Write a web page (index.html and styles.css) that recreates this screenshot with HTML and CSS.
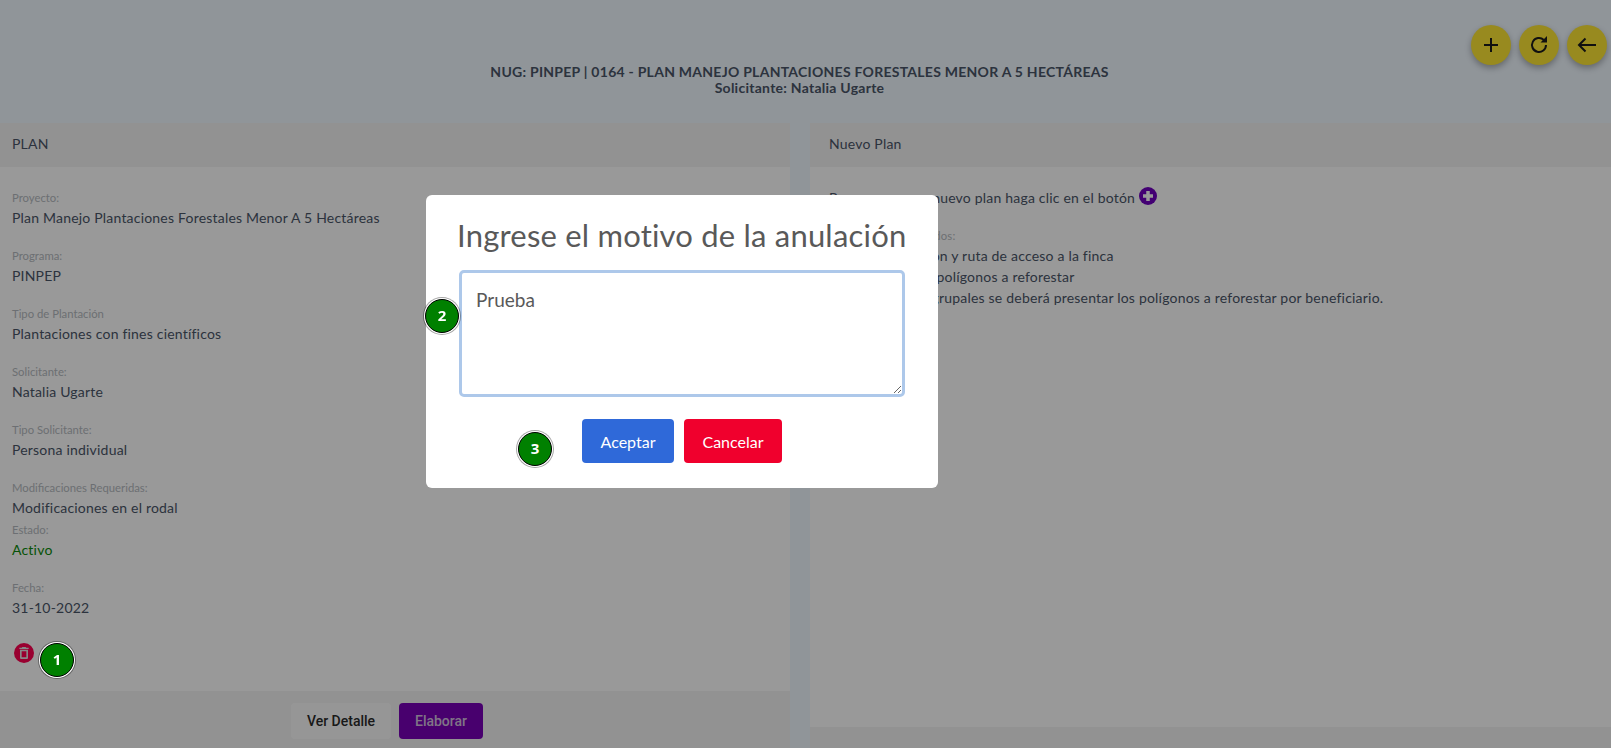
FILE: index.html
```html
<!DOCTYPE html>
<html lang="es">
<head>
<meta charset="utf-8">
<title>Plan</title>
<link rel="stylesheet" href="styles.css">
</head>
<body>
<div class="page">
  <header class="topbar">
    <div class="fabs">
      <button class="fab"><svg viewBox="0 0 24 24" class="fab-icon"><path d="M12 5v14M5 12h14"/></svg></button>
      <button class="fab"><svg viewBox="0 0 24 24" class="fab-icon"><path d="M19 12a7 7 0 1 1-2.200-5.100"/><path class="solid" d="M13.500 9.500h6.500V3z"/></svg></button>
      <button class="fab"><svg viewBox="0 0 24 24" class="fab-icon"><path d="M21 12H4M10.500 5.500 4 12l6.500 6.500"/></svg></button>
    </div>
    <h1 class="title">NUG: PINPEP | 0164 - PLAN MANEJO PLANTACIONES FORESTALES MENOR A 5 HECTÁREAS<br>Solicitante: Natalia Ugarte</h1>
  </header>
  <main class="cards">
    <section class="card">
      <div class="card-head head-left">PLAN</div>
      <div class="card-body body-left">
        <div class="field"><div class="label">Proyecto:</div><div class="value">Plan Manejo Plantaciones Forestales Menor A 5 Hectáreas</div></div>
        <div class="field"><div class="label">Programa:</div><div class="value">PINPEP</div></div>
        <div class="field"><div class="label">Tipo de Plantación</div><div class="value">Plantaciones con fines científicos</div></div>
        <div class="field"><div class="label">Solicitante:</div><div class="value">Natalia Ugarte</div></div>
        <div class="field"><div class="label">Tipo Solicitante:</div><div class="value">Persona individual</div></div>
        <div class="field tight"><div class="label">Modificaciones Requeridas:</div><div class="value">Modificaciones en el rodal</div></div>
        <div class="field"><div class="label">Estado:</div><div class="value active">Activo</div></div>
        <div class="field"><div class="label">Fecha:</div><div class="value">31-10-2022</div></div>
        <button class="trash"><svg viewBox="0 0 24 24" class="trash-icon"><path d="M6 19c0 1.100.9 2 2 2h8c1.100 0 2-.9 2-2V7H6v12zM8.500 9.500h7v9h-7zm7-5.500-1-1h-5l-1 1H5v2h14V4z" fill-rule="evenodd"/></svg></button>
      </div>
      <div class="card-foot foot-left">
        <button class="btn btn-light">Ver Detalle</button>
        <button class="btn btn-purple">Elaborar</button>
      </div>
    </section>
    <section class="card">
      <div class="card-head head-right">Nuevo Plan</div>
      <div class="card-body body-right">
        <p class="intro">Para generar un nuevo plan haga clic en el botón <svg viewBox="0 0 18 18" class="add-icon"><circle cx="9" cy="9" r="9"/><path d="M9 4v10M4 9h10"/></svg></p>
        <div class="label req">Documentos requeridos:</div>
        <div class="value">Plano de ubicación y ruta de acceso a la finca</div>
        <div class="value">Ubicación de los polígonos a reforestar</div>
        <div class="value">Para solicitudes grupales se deberá presentar los polígonos a reforestar por beneficiario.</div>
      </div>
      <div class="card-foot foot-right"></div>
    </section>
  </main>
</div>
<div class="overlay">
  <div class="modal">
    <h2 class="modal-title">Ingrese el motivo de la anulación</h2>
    <textarea class="reason">Prueba</textarea>
    <div class="actions">
      <button class="action accept">Aceptar</button>
      <button class="action cancel">Cancelar</button>
    </div>
  </div>
  <span class="badge badge-1">1</span>
  <span class="badge badge-2">2</span>
  <span class="badge badge-3">3</span>
</div>
</body>
</html>
```
FILE: styles.css
```css
* { box-sizing: border-box; }
html, body { margin: 0; height: 100%; overflow: hidden; }
body { background: #f0f8ff; font-family: "Lato", "Noto Sans", sans-serif; color: #4a5568; font-size: 14px; letter-spacing: .2px; }
button { font-family: inherit; border: 0; cursor: pointer; }
.page { height: 748px; display: flex; flex-direction: column; }
.topbar { height: 123px; flex: none; padding: 25px 4px 0 0; }
.fabs { display: flex; justify-content: flex-end; gap: 8px; height: 39px; }
.fab { width: 40px; height: 40px; border-radius: 50%; padding: 8px; background: #fde635; box-shadow: 0 3px 6px rgba(0,0,0,.3); }
.fab-icon { width: 24px; height: 24px; display: block; fill: none; stroke: #1c1c1c; stroke-width: 2; }
.fab-icon .solid { fill: #1c1c1c; stroke: none; }
.title { margin: 0; padding-right: 8px; font-size: 14px; line-height: 16px; font-weight: 700; letter-spacing: .26px; text-align: center; }
.cards { flex: 1; min-height: 0; display: grid; grid-template-columns: 790px 1fr; gap: 20px; }
.card { background: #fff; display: flex; flex-direction: column; min-height: 0; }
.card-head { height: 44px; flex: none; background: #f4f4f4; display: flex; align-items: center; padding-bottom: 3px; }
.head-left { padding-left: 12px; }
.head-right { padding-left: 19px; }
.card-body { flex: 1; min-height: 0; }
.body-left { padding: 22px 12px 0; }
.body-right { padding: 20px 19px 0; }
.card-foot { flex: none; background: #f4f4f4; }
.foot-left { height: 57px; display: flex; justify-content: center; gap: 8px; padding: 12px 16px 0 0; }
.foot-right { height: 21px; }
.field { height: 58px; }
.field.tight { height: 42px; }
.field .value { margin-top: 1px; }
.label { font-size: 11.3px; line-height: 17px; letter-spacing: 0; color: #b5bac0; }
.value { font-size: 14px; line-height: 21px; }
.active { color: #0a8a0a; }
.trash { width: 20px; height: 20px; padding: 2px; margin: 6px 0 0 2px; border-radius: 50%; background: #ff0050; display: block; }
.trash-icon { display: block; width: 16px; height: 16px; fill: #e2e2e2; }
.btn { height: 36px; border-radius: 4px; font-family: "Roboto", sans-serif; font-weight: 500; font-size: 14px; letter-spacing: 0; }
.btn-light { width: 100px; background: #fbfbfb; color: #2b2b2b; }
.btn-purple { width: 84px; background: #7800b7; color: #d5c3e0; }
.intro { margin: 0 0 21px; height: 19px; line-height: 19px; font-size: 14px; }
.add-icon { width: 18px; height: 18px; vertical-align: -2px; fill: #7000c0; stroke: #fff; stroke-width: 3.500; }
.add-icon circle { stroke: none; }
.req { margin-bottom: 1px; letter-spacing: .2px; }
.overlay { position: fixed; inset: 0; background: rgba(0,0,0,.4); padding: 195px 0 0 426px; }
.modal { width: 512px; height: 293px; background: #fff; border-radius: 6px; padding: 19px 33px 0; color: #595959; }
.modal-title { margin: 0 0 0 -2px; font-size: 31px; line-height: 43px; font-weight: 400; letter-spacing: .2px; color: #595959; white-space: nowrap; }
.reason { display: block; width: 446px; height: 127px; margin-top: 13px; padding: 14px; border: 3px solid #adc8ea; border-radius: 5px; outline: 0; font-family: inherit; font-size: 19px; line-height: 26px; color: #595959; resize: vertical; }
.actions { display: flex; justify-content: center; gap: 10px; margin-top: 22px; }
.action { height: 44px; border-radius: 4px; font-size: 16px; letter-spacing: 0; color: #fff; }
.accept { width: 92px; background: #2f69d9; }
.cancel { width: 98px; background: #f0002d; }
.badge { position: absolute; width: 34px; height: 34px; border-radius: 50%; background: #008000; color: #fff; font-family: "Open Sans", sans-serif; font-weight: 700; font-size: 15px; line-height: 31px; letter-spacing: 0; text-align: center; border: 1px solid #000; box-shadow: 0 0 0 1px #fff, 0 0 0 2px rgba(0,0,0,.35), inset 0 0 0 1px #008000; }
.badge-1 { left: 40px; top: 643px; }
.badge-2 { left: 425px; top: 299px; }
.badge-3 { left: 518px; top: 432px; }
```
